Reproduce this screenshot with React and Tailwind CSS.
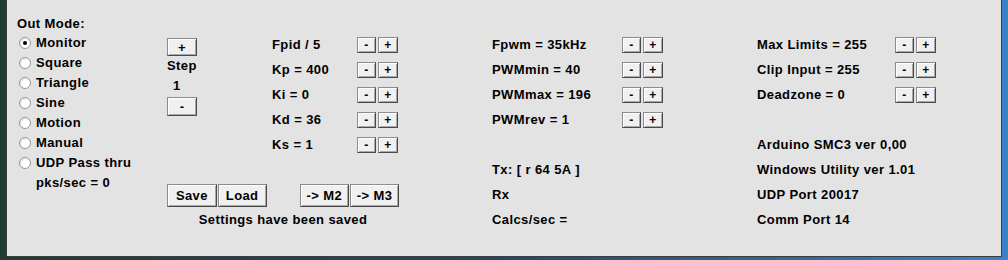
import React from "react";

const font = { fontFamily: '"Liberation Sans", Arial, sans-serif' };

function Btn({ children, className = "" }) {
  return (
    <div
      className={
        "flex items-center justify-center bg-[#f0f0f0] border border-[#8c8c8c] border-r-[#4a4a4a] border-b-[#4a4a4a] shadow-[inset_1px_1px_0_#ffffff,inset_-1px_-1px_0_#a8a8a8] text-black leading-none " +
        className
      }
    >
      {children}
    </div>
  );
}

function PM() {
  return (
    <div className="flex gap-[2px]">
      <Btn className="w-[19px] h-[16px] text-[12px]">-</Btn>
      <Btn className="w-[20px] h-[16px] text-[12px]">+</Btn>
    </div>
  );
}

function Radio({ checked, label }) {
  return (
    <div className="h-[20px] flex items-center">
      <div className="ml-[2px] w-[12px] h-[12px] rounded-full border border-[#9a9a9a] bg-[radial-gradient(circle_at_60%_60%,#ffffff_40%,#d4d4d4_100%)] flex items-center justify-center">
        {checked && <div className="w-[4px] h-[4px] rounded-full bg-black" />}
      </div>
      <span className="ml-[5px]">{label}</span>
    </div>
  );
}

function Row({ label, w, buttons = true }) {
  return (
    <div className="h-[25px] flex items-center">
      <div className={w}>{label}</div>
      {buttons && <PM />}
    </div>
  );
}

export default function App() {
  return (
    <div
      className="w-[1008px] h-[260px] bg-[linear-gradient(90deg,#1f3d33_0%,#23476a_50%,#3a82c6_100%)] overflow-hidden"
      style={font}
    >
      <div className="ml-[6px] w-[996px] h-[257px] bg-[#e3e3e3] border-l border-r border-b border-[#3c3c3c] text-[13px] font-bold tracking-[0.4px] text-black flex pl-[10px]">
        {/* Column 1 */}
        <div className="w-[150px] pt-[14px]">
          <div className="h-[19px] flex items-center">Out Mode:</div>
          <Radio checked label="Monitor" />
          <Radio label="Square" />
          <Radio label="Triangle" />
          <Radio label="Sine" />
          <Radio label="Motion" />
          <Radio label="Manual" />
          <Radio label="UDP Pass thru" />
          <div className="h-[20px] flex items-center pl-[19px]">pks/sec = 0</div>
        </div>

        {/* Column 2 */}
        <div className="w-[325px] pt-[32px] flex flex-col">
          <div className="flex items-start">
            <div className="w-[105px] mt-[6px] flex flex-col">
              <Btn className="w-[30px] h-[18px] text-[13px]">+</Btn>
              <div className="h-[20px] flex items-center">Step</div>
              <div className="h-[20px] flex items-center pl-[6px]">1</div>
              <Btn className="w-[30px] h-[19px] mt-[1px] text-[13px]">-</Btn>
            </div>
            <div className="flex flex-col">
              <Row label="Fpid / 5" w="w-[85px]" />
              <Row label="Kp = 400" w="w-[85px]" />
              <Row label="Ki = 0" w="w-[85px]" />
              <Row label="Kd = 36" w="w-[85px]" />
              <Row label="Ks = 1" w="w-[85px]" />
            </div>
          </div>
          <div className="mt-[27px] w-[232px] flex flex-col">
            <div className="flex">
              <Btn className="w-[50px] h-[23px]">Save</Btn>
              <Btn className="w-[49px] h-[23px] ml-[1px]">Load</Btn>
              <Btn className="w-[50px] h-[23px] ml-[33px]">-&gt; M2</Btn>
              <Btn className="w-[49px] h-[23px] ml-[1px]">-&gt; M3</Btn>
            </div>
            <div className="h-[25px] flex items-center justify-center">Settings have been saved</div>
          </div>
        </div>

        {/* Column 3 */}
        <div className="w-[265px] pt-[32px] flex flex-col">
          <Row label="Fpwm = 35kHz" w="w-[130px]" />
          <Row label="PWMmin = 40" w="w-[130px]" />
          <Row label="PWMmax = 196" w="w-[130px]" />
          <Row label="PWMrev = 1" w="w-[130px]" />
          <div className="h-[25px]" />
          <Row label="Tx: [ r 64 5A ]" w="w-[130px]" buttons={false} />
          <Row label="Rx" w="w-[130px]" buttons={false} />
          <Row label="Calcs/sec =" w="w-[130px]" buttons={false} />
        </div>

        {/* Column 4 */}
        <div className="pt-[32px] flex flex-col">
          <Row label="Max Limits = 255" w="w-[138px]" />
          <Row label="Clip Input = 255" w="w-[138px]" />
          <Row label="Deadzone = 0" w="w-[138px]" />
          <div className="h-[25px]" />
          <Row label="Arduino SMC3 ver 0,00" w="w-[200px]" buttons={false} />
          <Row label="Windows Utility ver 1.01" w="w-[200px]" buttons={false} />
          <Row label="UDP Port 20017" w="w-[200px]" buttons={false} />
          <Row label="Comm Port 14" w="w-[200px]" buttons={false} />
        </div>
      </div>
    </div>
  );
}
